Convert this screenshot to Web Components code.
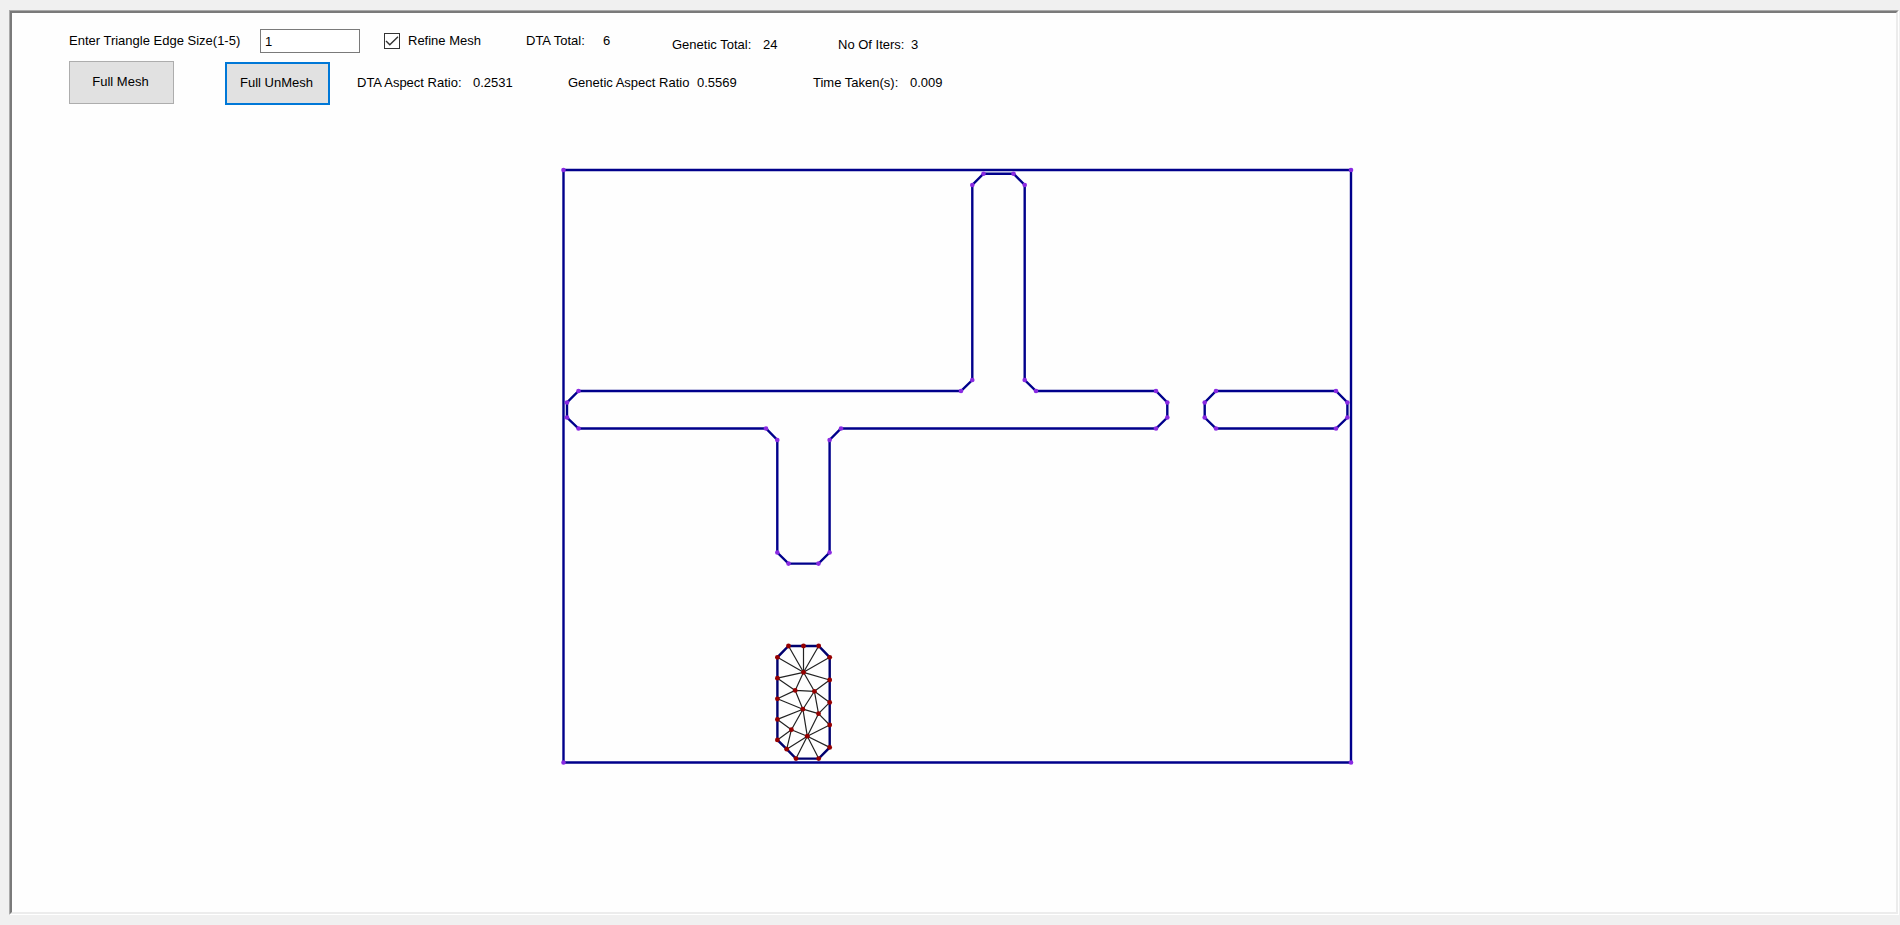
<!DOCTYPE html>
<html lang="en">
<head>
<meta charset="utf-8">
<title>Triangle Mesh</title>
<style>
  body { margin: 0; background: #f0f0f0; font: 13px/16px "Liberation Sans", Arial, sans-serif; color: #000; }
</style>
</head>
<body>
<mesh-app></mesh-app>
<script>
class MeshApp extends HTMLElement {
  constructor() {
    super();
    this.attachShadow({ mode: 'open' }).innerHTML = `
      <style>
        :host { display: flex; box-sizing: border-box; min-height: 100vh; padding: 10px 1px 10px 9px; }
        mesh-panel { flex: 1; }
        header { padding: 16px 16px 0 57px; display: flex; flex-direction: column; gap: 8px; }
        .row { display: flex; align-items: center; }
        .row.tall { height: 44px; }
        .low { align-self: flex-end; }
        .top { align-self: flex-start; }
        .second { margin: 0 27px 0 51px; }
        mesh-check { width: 142px; margin-left: 24px; }
      </style>
      <mesh-panel>
        <header>
          <div class="row">
            <mesh-input label="Enter Triangle Edge Size(1-5)" value="1"></mesh-input>
            <mesh-check>Refine Mesh</mesh-check>
            <mesh-stat style="--width:146px;--label:77px" value="6">DTA Total:</mesh-stat>
            <mesh-stat class="low" style="--width:166px;--label:91px" value="24">Genetic Total:</mesh-stat>
            <mesh-stat class="low" style="--width:140px;--label:73px" value="3">No Of Iters:</mesh-stat>
          </div>
          <div class="row tall">
            <mesh-button class="top">Full Mesh</mesh-button>
            <mesh-button class="low second" active>Full UnMesh</mesh-button>
            <mesh-stat style="--width:211px;--label:116px" value="0.2531">DTA Aspect Ratio:</mesh-stat>
            <mesh-stat style="--width:245px;--label:129px" value="0.5569">Genetic Aspect Ratio</mesh-stat>
            <mesh-stat style="--width:180px;--label:97px" value="0.009">Time Taken(s):</mesh-stat>
          </div>
        </header>
        <mesh-canvas></mesh-canvas>
      </mesh-panel>`;
  }
}

class MeshPanel extends HTMLElement {
  constructor() {
    super();
    this.attachShadow({ mode: 'open' }).innerHTML = `
      <style>
        :host { display: flex; border: 1px solid #a9a9a9; border-right-color: #fff; border-bottom-color: #fff; }
        .inner { flex: 1; background: #fefefe; border: 2px solid #7a7a7a; border-right-color: #ececec; border-bottom-color: #ececec; }
      </style>
      <div class="inner"><slot></slot></div>`;
  }
}

class MeshInput extends HTMLElement {
  constructor() {
    super();
    this.attachShadow({ mode: 'open' }).innerHTML = `
      <style>
        :host { display: flex; align-items: center; }
        label { width: 191px; }
        input { box-sizing: border-box; width: 100px; height: 24px; padding: 0 4px; border: 1px solid #7a7a7a; border-radius: 0; background: #fff; font: inherit; color: inherit; outline: 0; }
      </style>
      <label for="size"></label><input id="size" type="text">`;
  }
  connectedCallback() {
    this.shadowRoot.querySelector('label').textContent = this.getAttribute('label');
    this.shadowRoot.querySelector('input').value = this.getAttribute('value');
  }
}

class MeshCheck extends HTMLElement {
  constructor() {
    super();
    this.attachShadow({ mode: 'open' }).innerHTML = `
      <style>
        :host { display: block; }
        label { display: flex; align-items: center; gap: 8px; }
        .box { display: grid; }
        input, svg { grid-area: 1 / 1; width: 16px; height: 16px; margin: 0; }
        input { appearance: none; box-sizing: border-box; border: 1px solid #333; background: #fff; }
        svg { pointer-events: none; visibility: hidden; }
        input:checked + svg { visibility: visible; }
      </style>
      <label><span class="box"><input type="checkbox" checked><svg viewBox="0 0 16 16" aria-hidden="true"><path d="M2 8 5.8 11.8 14 3.8" fill="none" stroke="#333" stroke-width="1.4"/></svg></span><slot></slot></label>`;
  }
}

class MeshStat extends HTMLElement {
  constructor() {
    super();
    this.attachShadow({ mode: 'open' }).innerHTML = `
      <style>
        :host { display: flex; width: var(--width); white-space: nowrap; }
        .name { width: var(--label); }
      </style>
      <span class="name"><slot></slot></span><output></output>`;
  }
  connectedCallback() {
    this.shadowRoot.querySelector('output').textContent = this.getAttribute('value');
  }
}

class MeshButton extends HTMLElement {
  constructor() {
    super();
    this.attachShadow({ mode: 'open' }).innerHTML = `
      <style>
        :host { display: block; }
        button { display: block; box-sizing: border-box; width: 105px; height: 43px; padding: 0 2px 2px 0; border: 1px solid #adadad; border-radius: 0; background: #e1e1e1; font: inherit; color: inherit; }
        :host([active]) button { border: 2px solid #0078d7; }
      </style>
      <button type="button"><slot></slot></button>`;
  }
}

class MeshCanvas extends HTMLElement {
  constructor() {
    super();
    const walls = [
      [[563.5,170],[1351,170],[1351,762.5],[563.5,762.5]],
      [[578.5,391],[961,391],[972.3,380],[972.3,185],[983.5,173.7],[1013.5,173.7],[1024.7,185],[1024.7,380],[1036,391],
       [1156,391],[1167.3,402.5],[1167.3,417.5],[1156,428.5],[841,428.5],[829.6,440],[829.6,552.5],[818.5,563.6],
       [788.5,563.6],[777.3,552.5],[777.3,440],[766,428.5],[578.5,428.5],[567,417.5],[567,402.5]],
      [[1216,391],[1336,391],[1347.4,402.5],[1347.4,417.5],[1336,428.5],[1216,428.5],[1204.7,417.5],[1204.7,402.5]]
    ];
    const n = {
      a:[777.4,657.3], b:[777.4,678.2], c:[777.4,698.8], d:[777.4,719.4], e:[777.4,739.9], f:[786.7,749.2],
      g:[796,758.6], h:[818.7,758.6], i:[829.7,747.4], j:[829.7,725], k:[829.7,702.4], l:[829.7,680], m:[829.7,657.3],
      n:[818.7,646], o:[803.5,646], p:[788.5,646],
      A:[803.5,672.3], B:[795.2,690.4], C:[814.4,691.3], D:[802.9,709.2], E:[818.5,713.7], F:[791.4,729.7], G:[807.3,736.2]
    };
    const edges = 'Ap Ao An Aa Ab Am Al AB AC Bb Bc BC BD Cl Ck CD CE Dc Dd DE DG DF Ek Ej EG Fd Fe Ff FG Gf Gg Gh Gi Gj'.split(' ');
    const poly = (pts, color) => `<polygon points="${pts.join(' ')}" fill="none" stroke="${color}" stroke-width="2.4"/>`;
    const dot = (p, r, color) => `<circle cx="${p[0]}" cy="${p[1]}" r="${r}" fill="${color}"/>`;
    const ring = 'abcdefghijklmnop'.split('').map(k => n[k]);
    this.attachShadow({ mode: 'open' }).innerHTML = `
      <style>
        :host { display: block; }
        svg { display: block; width: 800px; max-width: 100%; margin: 0 auto; }
      </style>
      <svg viewBox="554 105 800 680" role="img" aria-label="Floor plan with meshed room">
        ${walls.map(w => poly(w, '#00008b')).join('')}
        ${walls.flat().map(p => dot(p, 2.3, '#8a2be2')).join('')}
        ${poly(ring, '#00006e')}
        <path d="${edges.map(([s, t]) => `M${n[s]}L${n[t]}`).join('')}" fill="none" stroke="#222" stroke-width="1.2"/>
        ${Object.values(n).map(p => dot(p, 2.4, '#960000')).join('')}
      </svg>`;
  }
}

customElements.define('mesh-panel', MeshPanel);
customElements.define('mesh-input', MeshInput);
customElements.define('mesh-check', MeshCheck);
customElements.define('mesh-stat', MeshStat);
customElements.define('mesh-button', MeshButton);
customElements.define('mesh-canvas', MeshCanvas);
customElements.define('mesh-app', MeshApp);
</script>
</body>
</html>
